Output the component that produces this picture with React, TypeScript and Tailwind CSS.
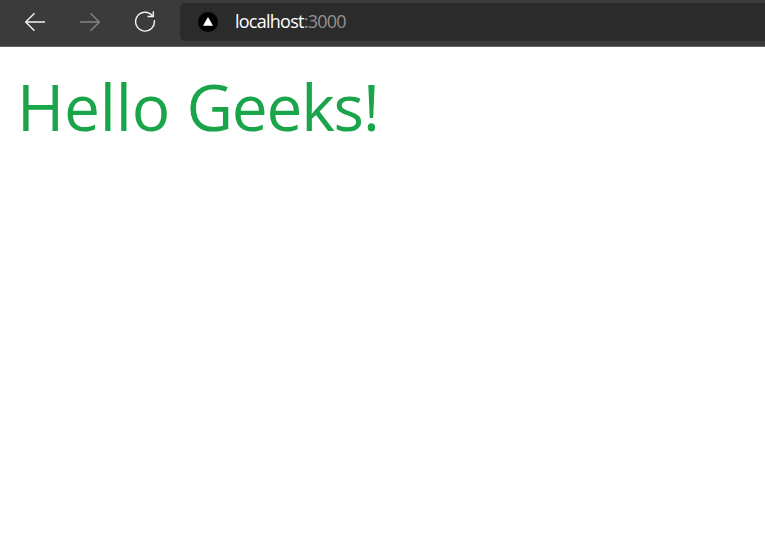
function BackIcon() {
  return (
    <svg width="22" height="20" viewBox="0 0 22 20" fill="none" stroke="#f2f2f2" strokeWidth="1.4">
      <path d="M21 10H1.7M10.5 1.2L1.7 10L10.5 18.8" />
    </svg>
  );
}

function ForwardIcon() {
  return (
    <svg width="22" height="20" viewBox="0 0 22 20" fill="none" stroke="#848484" strokeWidth="1.4">
      <path d="M1 10H20.3M11.5 1.2L20.3 10L11.5 18.8" />
    </svg>
  );
}

function ReloadIcon() {
  return (
    <svg width="22" height="23" viewBox="0 0 22 23" fill="none" stroke="#f2f2f2" strokeWidth="1.4">
      <path d="M20.3 10.2A9.4 9.4 0 1 1 18.2 5.6M19.3 1.3V6.5H13.5" />
    </svg>
  );
}

function SiteIcon() {
  return (
    <svg width="20" height="20" viewBox="0 0 20 20" className="shrink-0">
      <circle cx="10" cy="10" r="10" fill="#000" />
      <path d="M10 5L15 13.8H5Z" fill="#fff" />
    </svg>
  );
}

export default function App() {
  return (
    <div className="h-[555px] w-full overflow-hidden bg-white font-['Open_Sans',sans-serif]">
      <header className="flex h-[47px] items-start border-b border-[#606060] bg-[#3b3b3b]">
        <nav className="flex h-[43px] w-[180px] shrink-0 items-center gap-[33px] pl-6">
          <button aria-label="Back"><BackIcon /></button>
          <button aria-label="Forward"><ForwardIcon /></button>
          <button aria-label="Reload"><ReloadIcon /></button>
        </nav>
        <div className="mt-[3px] flex h-[38px] flex-1 items-center rounded-l-[5px] bg-[#2b2b2b] pl-[18px]">
          <SiteIcon />
          <span className="ml-[17px] pb-[2px] text-[18px] leading-6 tracking-[-0.75px] text-white">
            localhost<span className="text-[#929292]">:3000</span>
          </span>
        </div>
      </header>
      <main className="pl-[17px] pt-5">
        <h1 className="text-[64px] leading-[80px] tracking-[-1.2px] text-[#1aa54b]">
          <span className="tracking-[-0.2px]">Hello </span>Geeks!
        </h1>
      </main>
    </div>
  );
}
